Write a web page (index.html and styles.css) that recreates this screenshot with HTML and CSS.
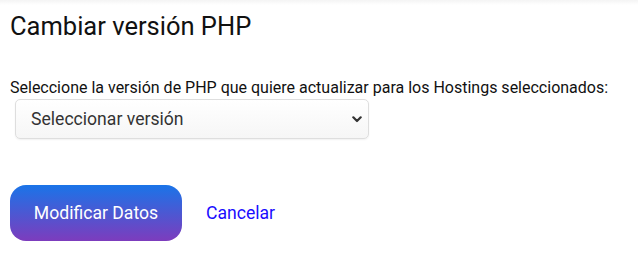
FILE: index.html
```html
<!DOCTYPE html>
<html lang="es">
<head>
    <meta charset="UTF-8">
    <meta name="viewport" content="width=device-width, initial-scale=1.0">
    <title>Cambiar versión PHP</title>
    <link rel="stylesheet" href="styles.css">
</head>
<body>
    <div class="panel">
        <h2 class="title">Cambiar versión PHP</h2>

        <form class="form" onsubmit="return false;">
            <label class="label" for="phpVersion">Seleccione la versión de PHP que quiere actualizar para los Hostings seleccionados:</label>
            <div class="select-wrap">
                <select id="phpVersion" class="select">
                    <option>Seleccionar versión</option>
                    <option>PHP 7.4</option>
                    <option>PHP 8.0</option>
                    <option>PHP 8.1</option>
                    <option>PHP 8.2</option>
                </select>
                <svg class="chevron" width="10" height="7" viewBox="0 0 10 7">
                    <path d="M1.3 1.3 L5 5 L8.7 1.3" fill="none" stroke="#333" stroke-width="2.2" stroke-linecap="round" stroke-linejoin="round"/>
                </svg>
            </div>

            <div class="actions">
                <button type="submit" class="btn">Modificar Datos</button>
                <a href="#" class="link">Cancelar</a>
            </div>
        </form>
    </div>
</body>
</html>
```

FILE: styles.css
```css
body {
    font-family: Roboto, "Liberation Sans", Arial, sans-serif;
    margin: 0;
    background: white;
    color: #111;
}
.panel {
    padding: 11px 10px 0;
    background: linear-gradient(to bottom, #f4f4f4 0, #ffffff 5px);
}
.title {
    margin: 0;
    font-size: 25.5px;
    font-weight: 400;
    line-height: 30px;
    color: #111;
}
.form {
    margin-top: 37px;
}
.label {
    display: block;
    font-size: 16px;
    line-height: 19px;
    color: #111;
}
.select-wrap {
    position: relative;
    width: 354px;
    margin: 2px 0 0 5px;
}
.select {
    appearance: none;
    -webkit-appearance: none;
    width: 100%;
    height: 40px;
    padding: 0 30px 0 15px;
    border: 1px solid #dedede;
    border-radius: 5px;
    background: linear-gradient(to bottom, #ffffff, #f6f6f6);
    box-shadow: 0 1px 2px rgba(0,0,0,0.06);
    font-family: inherit;
    font-size: 17.6px;
    color: #333;
    outline: none;
}
.chevron {
    position: absolute;
    right: 7px;
    top: 17px;
    pointer-events: none;
}
.actions {
    display: flex;
    align-items: center;
    gap: 24px;
    margin-top: 46px;
}
.btn {
    width: 172px;
    height: 56px;
    border: none;
    border-radius: 16px;
    background: linear-gradient(to bottom, #1a74e8, #7d3cbd);
    color: white;
    font-family: inherit;
    font-size: 17.6px;
    cursor: pointer;
}
.link {
    color: #1a0dff;
    text-decoration: none;
    font-size: 17.6px;
}
```
